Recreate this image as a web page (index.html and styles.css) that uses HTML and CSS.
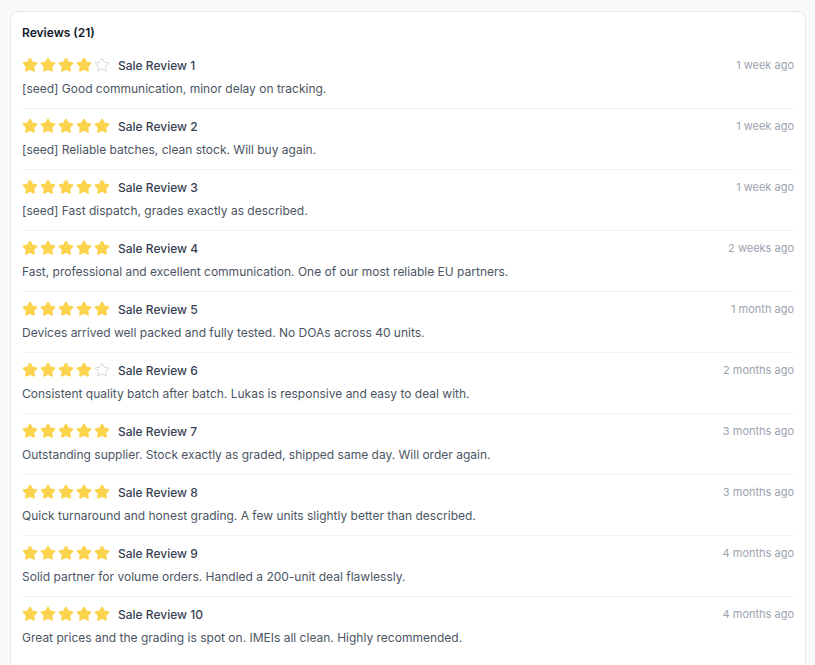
FILE: index.html
```html
<!DOCTYPE html>
<html lang="en">
<head>
  <meta charset="UTF-8">
  <title>Reviews</title>
  <link rel="stylesheet" href="styles.css">
</head>
<body>
  <div class="card">
    <h2 class="card-title">Reviews (21)</h2>
    <ul class="reviews" id="reviews"></ul>
  </div>

  <script>
    const reviews = [
      [4, 'Sale Review 1', '1 week ago', '[seed] Good communication, minor delay on tracking.'],
      [5, 'Sale Review 2', '1 week ago', '[seed] Reliable batches, clean stock. Will buy again.'],
      [5, 'Sale Review 3', '1 week ago', '[seed] Fast dispatch, grades exactly as described.'],
      [5, 'Sale Review 4', '2 weeks ago', 'Fast, professional and excellent communication. One of our most reliable EU partners.'],
      [5, 'Sale Review 5', '1 month ago', 'Devices arrived well packed and fully tested. No DOAs across 40 units.'],
      [4, 'Sale Review 6', '2 months ago', 'Consistent quality batch after batch. Lukas is responsive and easy to deal with.'],
      [5, 'Sale Review 7', '3 months ago', 'Outstanding supplier. Stock exactly as graded, shipped same day. Will order again.'],
      [5, 'Sale Review 8', '3 months ago', 'Quick turnaround and honest grading. A few units slightly better than described.'],
      [5, 'Sale Review 9', '4 months ago', 'Solid partner for volume orders. Handled a 200-unit deal flawlessly.'],
      [5, 'Sale Review 10', '4 months ago', 'Great prices and the grading is spot on. IMEIs all clean. Highly recommended.']
    ];

    const starPath = 'M11.525 2.295a.53.53 0 0 1 .95 0l2.31 4.679a2.123 2.123 0 0 0 1.595 1.16l5.166.756a.53.53 0 0 1 .294.904l-3.736 3.638a2.123 2.123 0 0 0-.611 1.878l.882 5.14a.53.53 0 0 1-.771.56l-4.618-2.428a2.122 2.122 0 0 0-1.973 0L6.396 21.01a.53.53 0 0 1-.77-.56l.881-5.139a2.122 2.122 0 0 0-.611-1.879L2.16 9.795a.53.53 0 0 1 .294-.906l5.165-.755a2.122 2.122 0 0 0 1.597-1.16z';

    function stars(n) {
      let html = '';
      for (let i = 1; i <= 5; i++) {
        const cls = i <= n ? 'star on' : 'star off';
        html += '<svg class="' + cls + '" viewBox="0 0 24 24"><path d="' + starPath + '"/></svg>';
      }
      return html;
    }

    const list = document.getElementById('reviews');
    list.innerHTML = reviews.map(r =>
      '<li class="review">' +
        '<div class="review-head">' +
          '<span class="stars">' + stars(r[0]) + '</span>' +
          '<span class="review-name">' + r[1] + '</span>' +
          '<span class="review-time">' + r[2] + '</span>' +
        '</div>' +
        '<p class="review-text">' + r[3] + '</p>' +
      '</li>'
    ).join('');
  </script>
</body>
</html>
```
FILE: styles.css
```css
body {
  margin: 0;
  padding: 11px 9px 0 10px;
  background-color: #f9fafb;
  font-family: Inter, "Noto Sans", sans-serif;
  color: #374151;
}

.card {
  background-color: #fff;
  border: 1px solid #e5e7eb;
  border-radius: 8px;
  padding: 12px 11px 12px 11px;
}

.card-title {
  margin: 0 0 15px;
  font-size: 12px;
  line-height: 18px;
  font-weight: 600;
  color: #111827;
}

.reviews {
  list-style: none;
  margin: 0;
  padding: 0;
}

.review {
  padding: 9px 0 9px;
  border-top: 1px solid #f0f1f4;
}

.review:first-child {
  border-top: none;
  padding-top: 0;
}

.review-head {
  display: flex;
  align-items: center;
  height: 16px;
}

.stars {
  display: flex;
  gap: 2px;
  margin-right: 8px;
}

.star {
  width: 16px;
  height: 16px;
  stroke-width: 2;
  stroke-linejoin: round;
}

.star.on {
  fill: #fcd34d;
  stroke: #fcd34d;
}

.star.off {
  fill: none;
  stroke: #d1d5db;
  stroke-width: 1.5;
}

.review-name {
  font-size: 12px;
  font-weight: 500;
  color: #374151;
}

.review-time {
  margin-left: auto;
  font-size: 11px;
  color: #9ca3af;
}

.review-text {
  margin: 6px 0 0;
  font-size: 12px;
  line-height: 20px;
  color: #4b5563;
}
```
